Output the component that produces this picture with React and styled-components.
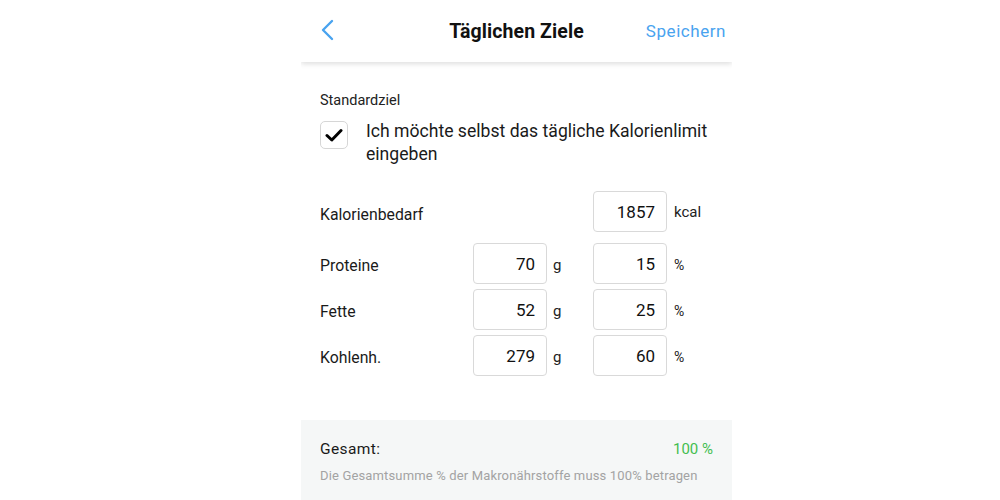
import React from "react";
import styled, { createGlobalStyle } from "styled-components";

const Global = createGlobalStyle`
  html, body { margin: 0; padding: 0; background: #fff; }
  body { font-family: Roboto, "Noto Sans", sans-serif; color: #111; }
`;

const Panel = styled.div`
  width: 431px;
  height: 500px;
  margin-left: 301px;
  display: flex;
  flex-direction: column;
  overflow: hidden;
`;

const Header = styled.header`
  height: 62px;
  flex-shrink: 0;
  display: grid;
  grid-template-columns: 1fr auto 1fr;
  align-items: center;
  padding: 0 6px;
  background: #fff;
  box-shadow: 0 2px 5px rgba(0, 0, 0, 0.13);
  position: relative;
  z-index: 1;
`;

const Back = styled.button`
  justify-self: start;
  border: 0;
  background: none;
  padding: 0;
  margin-left: 13px;
  width: 16px;
  height: 24px;
  display: flex;
  margin-top: -1px;
`;

const Title = styled.h1`
  margin: 0;
  font-size: 19.5px;
  font-weight: 700;
  color: #111;
  letter-spacing: 0.1px;
`;

const Save = styled.button`
  justify-self: end;
  border: 0;
  background: none;
  padding: 0;
  font-family: inherit;
  font-size: 17px;
  color: #49a3ef;
  letter-spacing: 0.55px;
`;

const Body = styled.main`
  flex: 1;
  padding: 30px 0 0 19px;
  display: flex;
  flex-direction: column;
`;

const Caption = styled.div`
  font-size: 14.5px;
  color: #222;
  line-height: 18px;
`;

const CheckRow = styled.label`
  display: flex;
  gap: 18px;
  margin-top: 10px;
  align-items: flex-start;
`;

const CheckBox = styled.span`
  width: 26px;
  height: 26px;
  flex-shrink: 0;
  border: 1px solid #d6d6d6;
  border-radius: 5px;
  display: flex;
  align-items: center;
  justify-content: center;
  margin-top: 1px;
`;

const CheckText = styled.span`
  font-size: 17.6px;
  line-height: 23px;
  color: #1a1a1a;
  width: 360px;
`;

const Grid = styled.div`
  display: grid;
  grid-template-columns: 153px 74px 46px 74px 1fr;
  row-gap: 5px;
  margin-top: 25px;
  align-items: center;
`;

const RowLabel = styled.div`
  grid-column: 1;
  font-size: 15.8px;
  color: #1a1a1a;
  padding-top: ${(p) => (p.$first ? "0" : "4px")};
`;

const Box = styled.div`
  grid-column: ${(p) => p.$col};
  height: 39px;
  border: 1px solid #d9d9d9;
  border-radius: 4px;
  display: flex;
  align-items: center;
  justify-content: flex-end;
  padding-right: 11px;
  font-size: 17px;
  color: #111;
  margin-bottom: ${(p) => (p.$extra ? "6px" : "0")};
`;

const Unit = styled.div`
  grid-column: ${(p) => p.$col};
  font-size: ${(p) => (p.$small ? "14px" : "15px")};
  color: #222;
  padding-left: ${(p) => p.$pad || "6px"};
  padding-top: 2px;
  margin-bottom: ${(p) => (p.$extra ? "8px" : "0")};
`;

const Footer = styled.footer`
  margin-top: auto;
  height: 80px;
  background: #f5f7f7;
  padding: 20px 19px 0 19px;
  box-sizing: border-box;
  flex-shrink: 0;
`;

const TotalRow = styled.div`
  display: flex;
  justify-content: space-between;
  align-items: baseline;
`;

const TotalLabel = styled.span`
  font-size: 15.5px;
  color: #1a1a1a;
  letter-spacing: 0.4px;
`;

const TotalValue = styled.span`
  font-size: 15px;
  color: #43be4f;
  margin-top: -4px;
`;

const Hint = styled.div`
  margin-top: 10px;
  font-size: 13px;
  color: #a3a3a3;
  letter-spacing: 0.15px;
`;

const macros = [
  { label: "Proteine", g: 70, p: 15 },
  { label: "Fette", g: 52, p: 25 },
  { label: "Kohlenh.", g: 279, p: 60 },
];

export default function App() {
  return (
    <>
      <Global />
      <Panel>
        <Header>
          <Back aria-label="Zurück">
            <svg width="14" height="22" viewBox="0 0 14 22" fill="none">
              <path d="M12 2 L3 11 L12 20" stroke="#49a3ef" strokeWidth="2.4" strokeLinecap="round" strokeLinejoin="round" />
            </svg>
          </Back>
          <Title>Täglichen Ziele</Title>
          <Save>Speichern</Save>
        </Header>
        <Body>
          <Caption>Standardziel</Caption>
          <CheckRow>
            <CheckBox>
              <svg width="18" height="14" viewBox="0 0 18 14" fill="none">
                <path d="M2 7.5 L6.8 12 L16 2.5" stroke="#000" strokeWidth="3" strokeLinecap="round" strokeLinejoin="round" />
              </svg>
            </CheckBox>
            <CheckText>Ich möchte selbst das tägliche Kalorienlimit eingeben</CheckText>
          </CheckRow>
          <Grid>
            <RowLabel $first>Kalorienbedarf</RowLabel>
            <Box $col={4} $extra>1857</Box>
            <Unit $col={5} $pad="7px" $extra>kcal</Unit>
            {macros.map((m) => (
              <React.Fragment key={m.label}>
                <RowLabel>{m.label}</RowLabel>
                <Box $col={2}>{m.g}</Box>
                <Unit $col={3}>g</Unit>
                <Box $col={4}>{m.p}</Box>
                <Unit $col={5} $pad="7px" $small>%</Unit>
              </React.Fragment>
            ))}
          </Grid>
        </Body>
        <Footer>
          <TotalRow>
            <TotalLabel>Gesamt:</TotalLabel>
            <TotalValue>100 %</TotalValue>
          </TotalRow>
          <Hint>Die Gesamtsumme % der Makronährstoffe muss 100% betragen</Hint>
        </Footer>
      </Panel>
    </>
  );
}
